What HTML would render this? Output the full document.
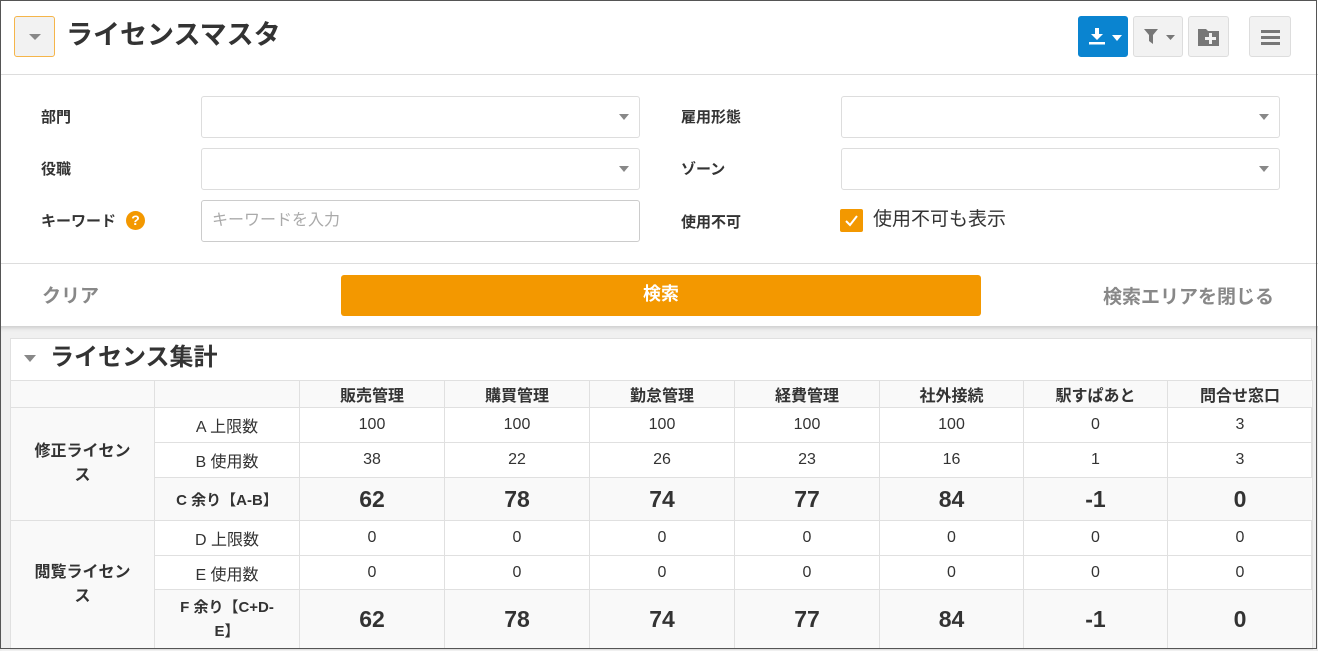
<!DOCTYPE html>
<html><head><meta charset="utf-8"><style>
*{box-sizing:border-box;margin:0;padding:0}
body{width:1318px;height:651px;overflow:hidden;background:#fff;font-family:"Liberation Sans","Noto Sans CJK JP",sans-serif;color:#333;position:relative}
.a{position:absolute}
.frame{position:absolute;left:0;top:0;width:1317px;height:649px;border:1px solid #555;z-index:10;pointer-events:none}
.lbl{position:absolute;font-size:15px;font-weight:bold;color:#333}
.sel{position:absolute;height:42px;border:1px solid #ddd;border-radius:3px;background:#fff}
.sel:after{content:"";position:absolute;right:10px;top:17px;border-left:5px solid transparent;border-right:5px solid transparent;border-top:6px solid #888}
.btn{position:absolute;top:16px;height:41px;border:1px solid #ddd;border-radius:3px;background:#f2f2f2}
table{position:absolute;left:10px;top:380px;border-collapse:collapse;table-layout:fixed}
td{border:1px solid #e0e0e0;text-align:center;font-size:16px;color:#333;padding:0;vertical-align:middle}
th{border:1px solid #e0e0e0;font-size:16px;font-weight:bold;background:#f9f9f9;height:27px}
.big td.v{font-size:23px;font-weight:bold}
.big td{background:#f9f9f9}
.g{background:#f9f9f9;font-weight:bold}
</style></head><body>
<div class="frame"></div>
<div class="a" style="left:14px;top:16px;width:41px;height:41px;border:1px solid #f5b54a;border-radius:3px;background:#f2f2f2"></div>
<div class="a" style="left:29px;top:34px;border-left:6px solid transparent;border-right:6px solid transparent;border-top:6px solid #888"></div>
<div class="a" style="left:66px;top:17px;font-size:27px;font-weight:bold;color:#333;line-height:36px">ライセンスマスタ</div>
<div class="btn" style="left:1078px;width:50px;background:#0a84d0;border-color:#0a84d0">
<svg class="a" style="left:9px;top:10px" width="34" height="20" viewBox="0 0 34 20"><path d="M7 1h4v6h4l-6 6-6-6h4z" fill="#fff"/><rect x="1" y="15" width="16" height="2.5" fill="#fff"/><path d="M24 8h10l-5 6z" fill="#fff"/></svg></div>
<div class="btn" style="left:1133px;width:50px">
<svg class="a" style="left:9px;top:11px" width="34" height="18" viewBox="0 0 34 18"><path d="M1 1h14l-5 6v9l-4-3V7z" fill="#777"/><path d="M23 7h9l-4.5 5z" fill="#777"/></svg></div>
<div class="btn" style="left:1188px;width:41px">
<svg class="a" style="left:9px;top:10px" width="22" height="20" viewBox="0 0 22 20"><path d="M0 2h8l2 2h11v15H0z" fill="#777"/><path d="M12 7v4h-4v3h4v4h3v-4h4v-3h-4V7z" fill="#f2f2f2" transform="translate(-1,-1)"/></svg></div>
<div class="btn" style="left:1249px;width:42px">
<div class="a" style="left:11px;top:13px;width:19px;height:3px;background:#777"></div>
<div class="a" style="left:11px;top:19px;width:19px;height:3px;background:#777"></div>
<div class="a" style="left:11px;top:25px;width:19px;height:3px;background:#777"></div></div>
<div class="a" style="left:0;top:74px;width:1318px;height:1px;background:#ddd"></div>
<div class="lbl" style="left:41px;top:106px">部門</div>
<div class="sel" style="left:201px;top:96px;width:439px"></div>
<div class="lbl" style="left:681px;top:106px">雇用形態</div>
<div class="sel" style="left:841px;top:96px;width:439px"></div>
<div class="lbl" style="left:41px;top:158px">役職</div>
<div class="sel" style="left:201px;top:148px;width:439px"></div>
<div class="lbl" style="left:681px;top:158px">ゾーン</div>
<div class="sel" style="left:841px;top:148px;width:439px"></div>
<div class="lbl" style="left:41px;top:210px">キーワード</div>
<div class="a" style="left:126px;top:211px;width:19px;height:19px;border-radius:50%;background:#f39800;color:#fff;font-size:14px;font-weight:bold;text-align:center;line-height:19px">?</div>
<div class="a" style="left:201px;top:200px;width:439px;height:42px;border:1px solid #ccc;border-radius:3px;font-size:16px;color:#aaa;padding:10px 10px;line-height:20px">キーワードを入力</div>
<div class="lbl" style="left:681px;top:211px">使用不可</div>
<div class="a" style="left:840px;top:209px;width:23px;height:23px;border-radius:2px;background:#f39800"></div>
<svg class="a" style="left:843px;top:212px" width="17" height="17" viewBox="0 0 17 17"><path d="M3 9l4 4 7-9" stroke="#fff" stroke-width="2" fill="none"/></svg>
<div class="a" style="left:873px;top:208px;font-size:19px;color:#333;line-height:24px">使用不可も表示</div>
<div class="a" style="left:0;top:263px;width:1318px;height:1px;background:#ddd"></div>
<div class="a" style="left:42px;top:281px;font-size:19px;font-weight:bold;color:#888">クリア</div>
<div class="a" style="left:341px;top:275px;width:640px;height:41px;background:#f39800;border-radius:3px;color:#fff;font-size:18px;font-weight:bold;text-align:center;line-height:39px">検索</div>
<div class="a" style="left:1103px;top:282px;font-size:19px;font-weight:bold;color:#888">検索エリアを閉じる</div>
<div class="a" style="left:0;top:326px;width:1318px;height:325px;background:#f0f0f0;box-shadow:inset 0 4px 4px -2px #ccc"></div>
<div class="a" style="left:10px;top:338px;width:1302px;height:311px;background:#fff;border:1px solid #e0e0e0"></div>
<div class="a" style="left:24px;top:355px;border-left:6px solid transparent;border-right:6px solid transparent;border-top:7px solid #888"></div>
<div class="a" style="left:50px;top:342px;font-size:24px;font-weight:bold;color:#333;line-height:32px">ライセンス集計</div>
<table>
<colgroup><col style="width:144px"><col style="width:145px"><col style="width:145px"><col style="width:145px"><col style="width:145px"><col style="width:145px"><col style="width:144px"><col style="width:144px"><col style="width:145px"></colgroup>
<tr><th></th><th></th><th>販売管理</th><th>購買管理</th><th>勤怠管理</th><th>経費管理</th><th>社外接続</th><th>駅すぱあと</th><th>問合せ窓口</th></tr>
<tr style="height:35px"><td rowspan="3" class="g" style="line-height:24px">修正ライセン<br>ス</td><td>A 上限数</td><td>100</td><td>100</td><td>100</td><td>100</td><td>100</td><td>0</td><td>3</td></tr>
<tr style="height:35px"><td>B 使用数</td><td>38</td><td>22</td><td>26</td><td>23</td><td>16</td><td>1</td><td>3</td></tr>
<tr style="height:43px" class="big"><td style="font-weight:bold;font-size:15px">C 余り【A-B】</td><td class="v">62</td><td class="v">78</td><td class="v">74</td><td class="v">77</td><td class="v">84</td><td class="v">-1</td><td class="v">0</td></tr>
<tr style="height:35px"><td rowspan="3" class="g" style="line-height:24px">閲覧ライセン<br>ス</td><td>D 上限数</td><td>0</td><td>0</td><td>0</td><td>0</td><td>0</td><td>0</td><td>0</td></tr>
<tr style="height:34px"><td>E 使用数</td><td>0</td><td>0</td><td>0</td><td>0</td><td>0</td><td>0</td><td>0</td></tr>
<tr style="height:60px" class="big"><td style="font-weight:bold;font-size:15px;line-height:24px">F 余り【C+D-<br>E】</td><td class="v">62</td><td class="v">78</td><td class="v">74</td><td class="v">77</td><td class="v">84</td><td class="v">-1</td><td class="v">0</td></tr>
</table>
</body></html>
